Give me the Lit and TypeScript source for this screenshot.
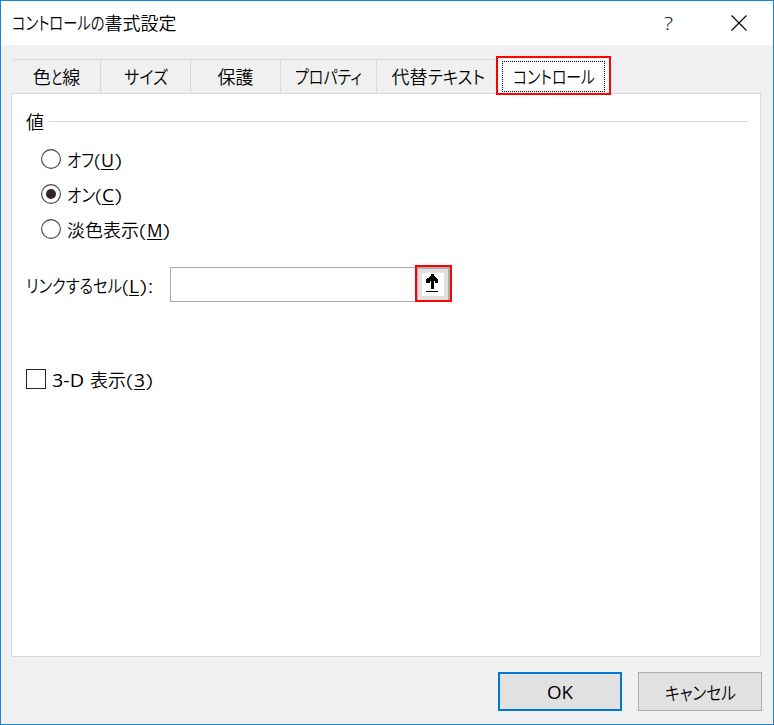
import { LitElement, html, css, svg } from "lit";
import { customElement, property } from "lit/decorators.js";

/** A run of text condensed or widened to a set advance width. */
@customElement("fit-text")
class FitText extends LitElement {
  @property() text = "";
  @property({ type: Number }) width = 0;
  @property({ type: Boolean, reflect: true }) latin = false;
  @property({ type: Boolean, reflect: true }) key = false;
  @property({ type: Boolean, reflect: true }) thin = false;
  static styles = css`
    :host { display: inline-block; height: 24px; line-height: 24px; white-space: pre; vertical-align: top; }
    .run { display: inline-block; transform-origin: 0 0; font-feature-settings: "palt"; }
    :host([latin]) .run { font-family: "Open Sans", "Noto Sans", sans-serif; font-size: 18px; font-weight: 400; }
    :host([thin]) .run { font-weight: 350; }
    :host([key]) .run { text-decoration: underline; text-decoration-thickness: 1px; text-underline-offset: 2px; }
  `;
  updated() {
    const run = this.renderRoot.querySelector(".run") as HTMLElement;
    run.style.transform = "none";
    const natural = run.getBoundingClientRect().width;
    this.style.width = this.width + "px";
    run.style.transform = `scaleX(${this.width / natural})`;
  }
  render() { return html`<span class="run">${this.text}</span>`; }
}

const t = (text: string, width: number) => html`<fit-text .text=${text} .width=${width}></fit-text>`;
const l = (text: string, width: number) => html`<fit-text latin .text=${text} .width=${width}></fit-text>`;
const p = (text: string, width: number) => html`<fit-text latin thin .text=${text} .width=${width}></fit-text>`;
const k = (text: string, width: number) => html`<fit-text latin key .text=${text} .width=${width}></fit-text>`;

@customElement("app-root")
class AppRoot extends LitElement {
  static styles = css`
    :host { display: block; width: 774px; height: 725px; font: 350 18px "Noto Sans CJK JP DemiLight", "Noto Sans CJK JP", sans-serif; color: #000; }
    * { box-sizing: border-box; }
    .dialog { height: 725px; border: 1px solid #1883d7; background: #f0f0f0; display: flex; flex-direction: column; }
    .title { height: 44px; flex: none; background: #fff; display: flex; padding: 9px 26px 0 11px; }
    .title .name { flex: 1; display: flex; }
    .title .help { width: 10px; margin: 0 57px 0 0; }
    .title svg { margin-top: 5px; }
    svg { display: block; flex: none; }
    .tabs { display: flex; height: 34px; margin: 14px 0 0 12px; flex: none; }
    .tab { border-top: 1px solid #d9d9d9; border-right: 1px solid #d9d9d9; display: flex; justify-content: center; padding-top: 4px; }
    .tab.last { border-right: 0; padding-left: 3px; }
    .active { height: 39px; width: 115px; margin-top: -3px; border: 2px solid #f00; background: #fff; padding: 3px 4px; position: relative; z-index: 1; }
    .focus { width: 103px; height: 31px; border: 1px dotted #000; display: flex; justify-content: center; padding-top: 2px; }
    .panel { width: 750px; height: 564px; flex: none; margin-left: 10px; border: 1px solid #d9d9d9; background: #fff; padding: 15px 12px 0 14px; }
    .group { display: flex; height: 25px; }
    .rule { flex: 1; height: 1px; background: #d9d9d9; margin: 12px 0 0 5px; }
    .radios { padding: 13px 0 0 15px; }
    .row { display: flex; height: 35px; }
    .mark { margin: 2px 6px 0 0; }
    .link { display: flex; height: 37px; margin-top: 13px; }
    .link .label { display: flex; width: 144px; padding-top: 8px; }
    .field { width: 245px; height: 35px; margin-top: 2px; border: 1px solid #ababab; border-right: 0; }
    .check { display: flex; margin-top: 65px; }
    .box { width: 20px; height: 20px; border: 1px solid #33202a; margin: 2px 6px 0 0; }
    .buttons { display: flex; gap: 16px; margin: 15px 11px 0 0; justify-content: flex-end; }
    .btn { width: 124px; height: 39px; background: #e1e1e1; border: 1px solid #adadad; display: flex; justify-content: center; padding-top: 7px; }
    .btn.ok { border: 2px solid #0078d7; padding-top: 5px; }
  `;

  radio(on: boolean) {
    return html`<svg class="mark" width="20" height="20" viewBox="0 0 20 20">
      <circle cx="10" cy="10" r="9.4" fill="#fff" stroke="#444" stroke-width="1.1" />
      ${on ? svg`<circle cx="10" cy="10" r="5" fill="#33242c" />` : ""}
    </svg>`;
  }

  tab(width: number, label: unknown, last = false) {
    return html`<div class="tab ${last ? "last" : ""}" style="width:${width}px">${label}</div>`;
  }

  render() {
    return html`
      <div class="dialog">
        <div class="title">
          <div class="name">${t("コントロールの", 92.5)}${t("書式設定", 72)}</div>
          <div class="help">${p("?", 9)}</div>
          <svg width="16" height="16" viewBox="0 0 16 16"><path d="M.5 .5L15.5 15.5M15.5 .5L.5 15.5" stroke="#000" stroke-width="1.1" /></svg>
        </div>
        <div class="tabs">
          ${this.tab(88, html`${t("色", 18)}${t("と", 11.5)}${t("線", 18)}`)}
          ${this.tab(90, t("サイズ", 44))}
          ${this.tab(90, t("保護", 36))}
          ${this.tab(96, t("プロパティ", 67))}
          ${this.tab(119, html`${t("代替", 36)}${t("テキスト", 57)}`, true)}
          <div class="active"><div class="focus">${t("コントロール", 82)}</div></div>
        </div>
        <div class="panel">
          <div class="group">${t("値", 18)}<div class="rule"></div></div>
          <div class="radios">
            <div class="row">${this.radio(false)}${t("オフ", 27)}${p("(", 7)}${k("U", 13)}${p(")", 8)}</div>
            <div class="row">${this.radio(true)}${t("オン", 28)}${p("(", 7)}${k("C", 12)}${p(")", 8)}</div>
            <div class="row">${this.radio(false)}${t("淡色表示", 72)}${p("(", 7.5)}${k("M", 15.5)}${p(")", 8)}</div>
          </div>
          <div class="link">
            <div class="label">${t("リンクするセル", 96)}${p("(", 7)}${k("L", 10)}${p(")", 8)}${p(":", 7)}</div>
            <div class="field"></div>
            <svg width="37" height="37" viewBox="0 0 37 37" shape-rendering="crispEdges">
              <path fill="#f00" d="M0 0h37v37H0z" />
              <path fill="#adadad" d="M2 2h33v33H2z" />
              <path fill="#e1e1e1" d="M3 4h30v31H3z" />
              <path fill="#fff" d="M7 8h22v23H7z" />
              <path d="M16 9h3v2h1v1h1v1h1v1h1v4h-3v-2h-1v8h-3v-8h-1v2h-4v-4h1v-1h2v-1h1v-1h1zM11 26h12v1H11z" />
            </svg>
          </div>
          <div class="check"><div class="box"></div>${l("3-D", 32)}${l(" ", 6)}${t("表示", 36)}${p("(", 7.5)}${k("3", 11)}${p(")", 8)}</div>
        </div>
        <div class="buttons">
          <div class="btn ok">${l("OK", 26)}</div>
          <div class="btn">${t("キャンセル", 71)}</div>
        </div>
      </div>
    `;
  }
}
